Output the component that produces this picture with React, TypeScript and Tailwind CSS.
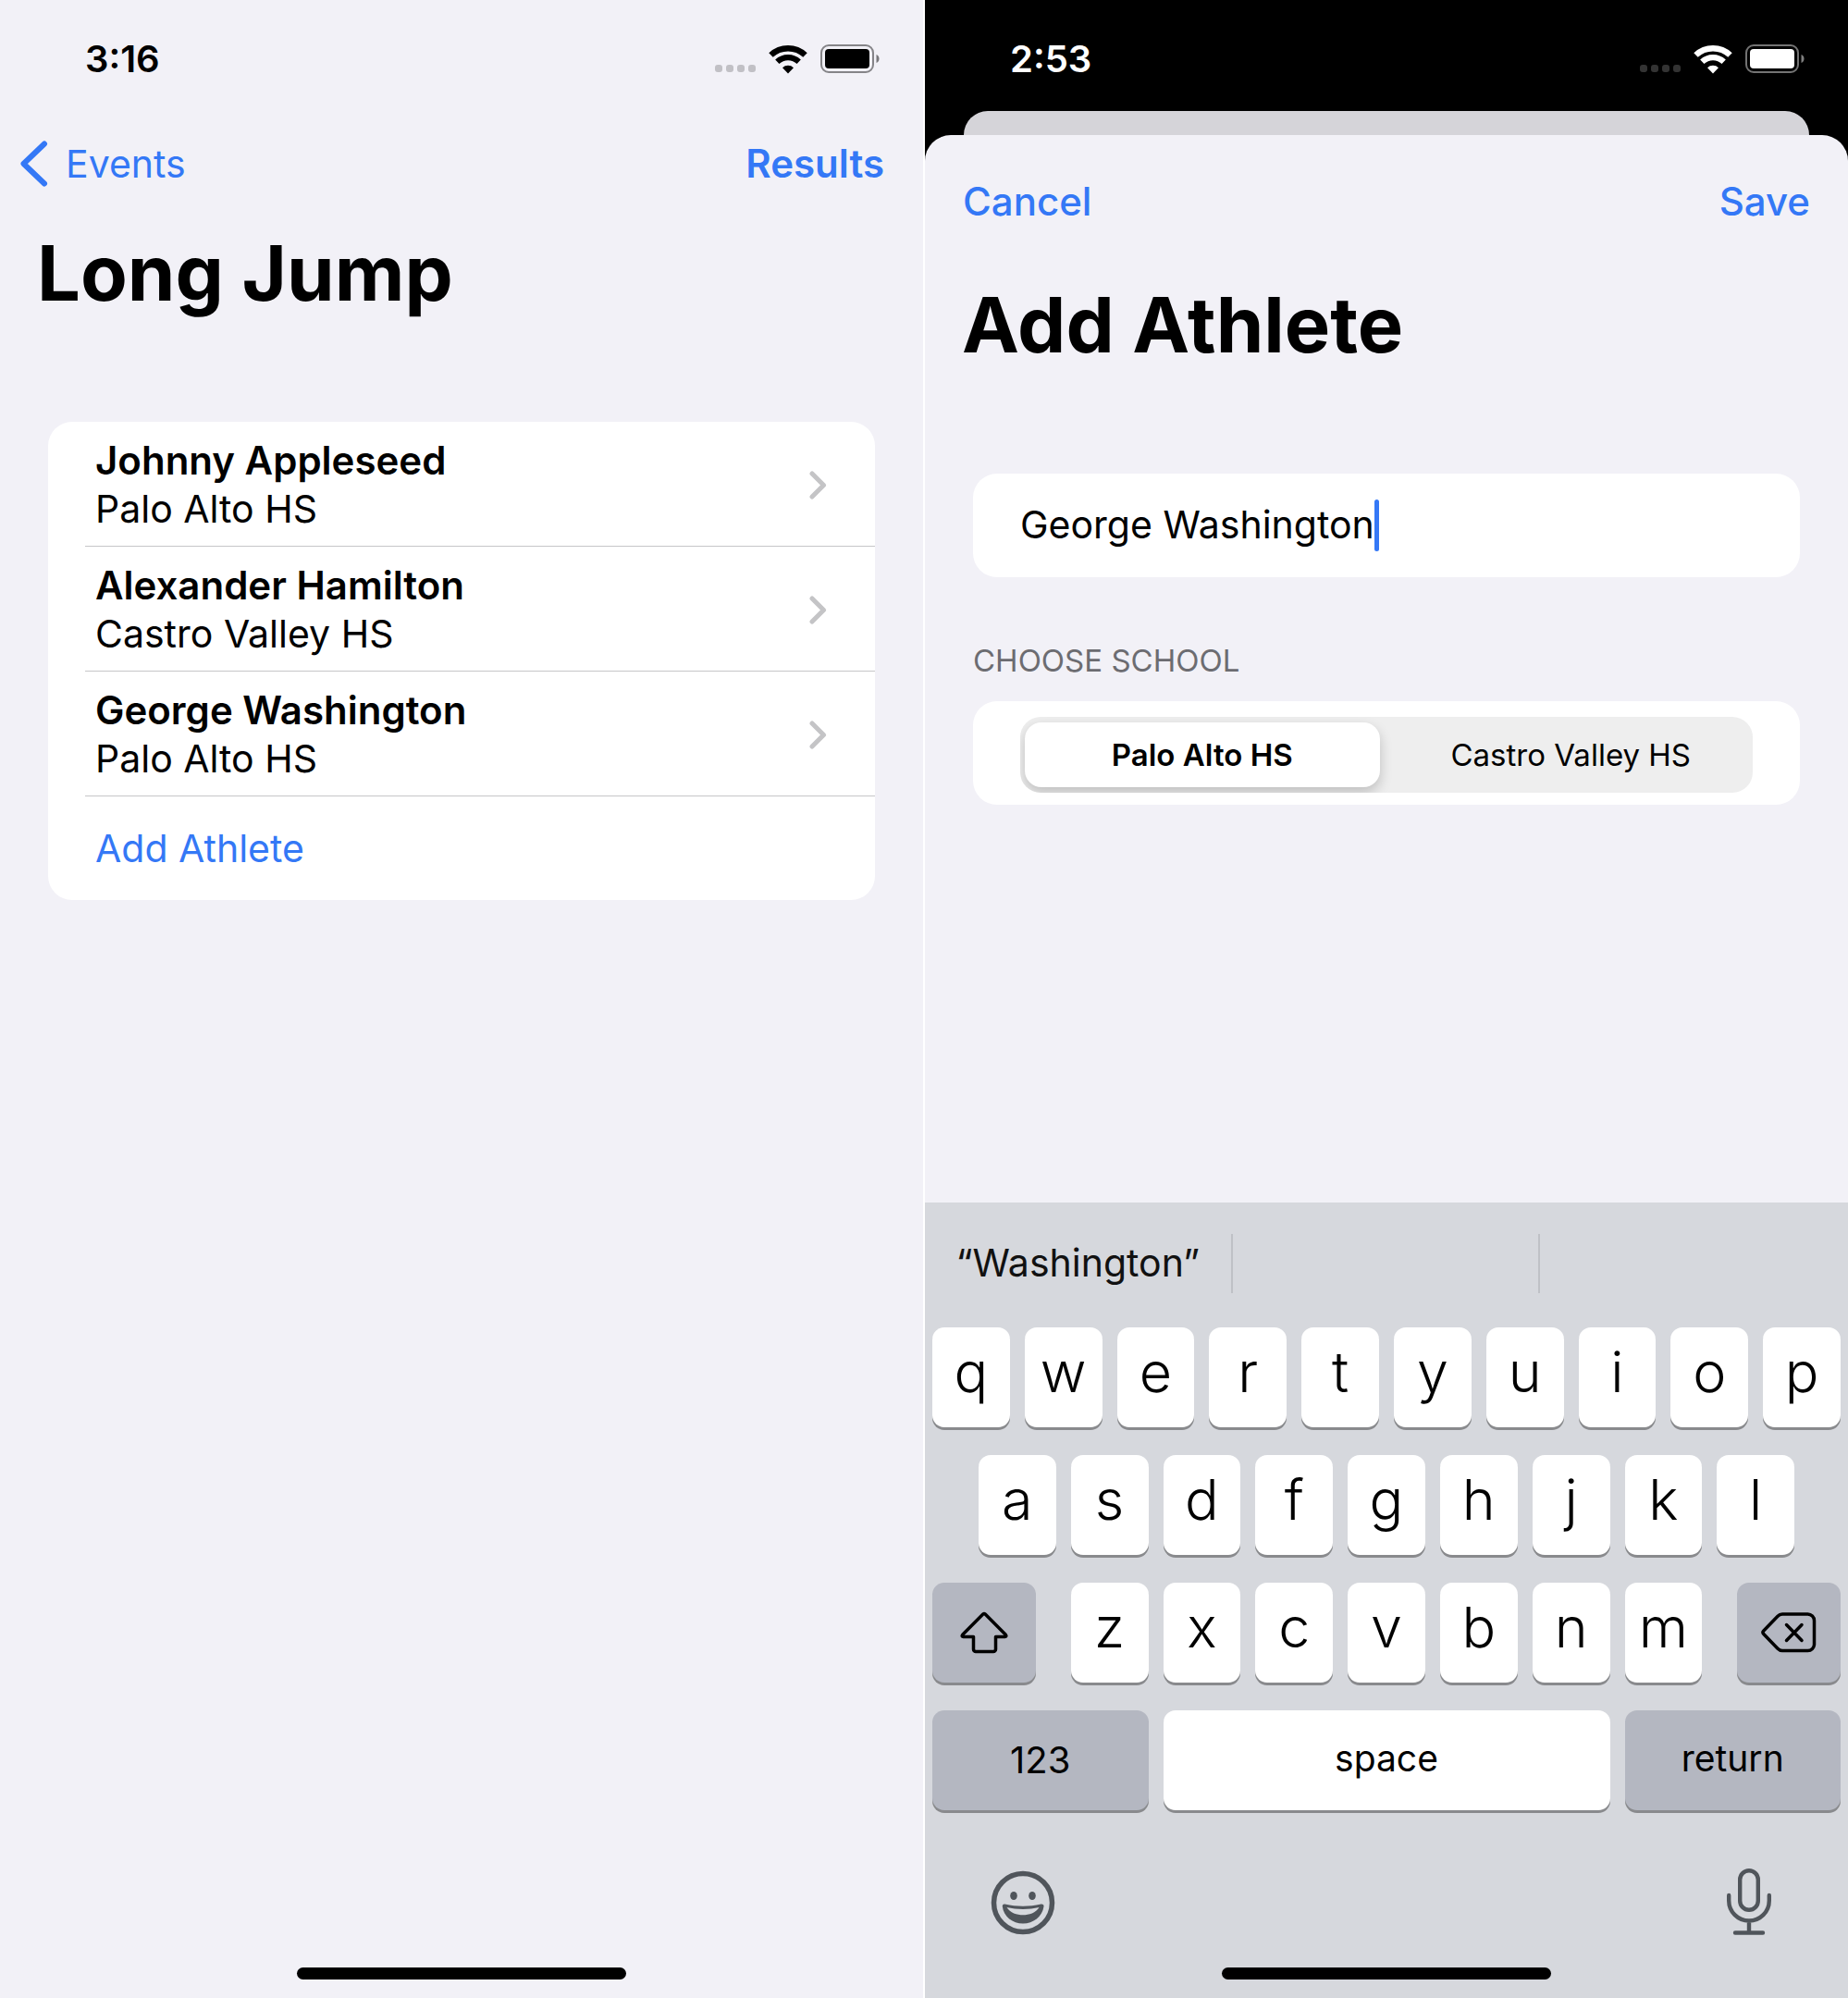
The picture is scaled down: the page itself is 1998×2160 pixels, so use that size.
import { useState, type ReactNode } from "react";

const athletes = [
  { name: "Johnny Appleseed", school: "Palo Alto HS" },
  { name: "Alexander Hamilton", school: "Castro Valley HS" },
  { name: "George Washington", school: "Palo Alto HS" },
];

const schools = ["Palo Alto HS", "Castro Valley HS"];

function WifiIcon() {
  return (
    <svg className="h-8 w-[42px]" viewBox="0 0 42 32" fill="none" stroke="currentColor" aria-hidden="true">
      <path d="M2.5 11.5a27 27 0 0 1 37 0" strokeWidth="6.5" />
      <path d="M9.3 18.8a17 17 0 0 1 23.4 0" strokeWidth="6.2" />
      <path d="M21 31.5l-6-6.2a8.6 8.6 0 0 1 12 0z" fill="currentColor" stroke="none" />
    </svg>
  );
}

function BatteryIcon() {
  return (
    <svg className="h-8 w-16" viewBox="0 0 64 32" aria-hidden="true">
      <rect x="1" y="1" width="56" height="29" rx="8" fill="none" stroke="currentColor" strokeOpacity=".45" strokeWidth="2" />
      <rect x="5" y="5" width="48" height="21" rx="4" fill="currentColor" />
      <path d="M60.5 11c4 1.5 4 7.5 0 9z" fill="currentColor" fillOpacity=".5" />
    </svg>
  );
}

function StatusBar({ time }: { time: string }) {
  return (
    <div className="flex h-[120px] items-start justify-between pt-10 pr-[47px] pl-[92px]">
      <time className="text-[40px] leading-[48px] font-semibold">{time}</time>
      <div className="flex items-center pt-2">
        <div className="mr-3.5 flex gap-1 pt-5">
          {[0, 1, 2, 3].map((dot) => (
            <span key={dot} className="size-2 rounded-[3px] bg-current opacity-20" />
          ))}
        </div>
        <WifiIcon />
        <span className="w-3.5" />
        <BatteryIcon />
      </div>
    </div>
  );
}

function HomeIndicator() {
  return <div className="mx-auto mb-5 h-[13px] w-[356px] rounded-full bg-black" />;
}

function EventScreen() {
  return (
    <section className="flex flex-1 flex-col bg-[#f2f1f7]">
      <StatusBar time="3:16" />
      <nav className="flex h-[114px] items-center justify-between pr-[42px] pl-[22px] text-[#3478f6]">
        <a href="#events" className="flex items-center gap-[18px] text-[41px] leading-[52px]">
          <svg className="h-[50px] w-[31px]" viewBox="0 0 31 50" fill="none" stroke="currentColor" strokeWidth="6" strokeLinecap="round" strokeLinejoin="round" aria-hidden="true">
            <path d="M26 3.500L3.500 25l22.500 21.500" />
          </svg>
          Events
        </a>
        <button type="button" className="text-[42px] leading-[52px] font-semibold">Results</button>
      </nav>
      <h1 className="px-10 text-[83px] leading-[122px] font-bold">Long Jump</h1>
      <ul className="mx-[52px] mt-[100px] overflow-hidden rounded-[26px] bg-white">
        {athletes.map((athlete) => (
          <li key={athlete.name}>
            <button type="button" className="flex w-full items-center justify-between pt-4 pr-[52px] pb-[14px] pl-[51px] text-left leading-[52px]">
              <span>
                <span className="block text-[42px] font-semibold">{athlete.name}</span>
                <span className="block text-[41px]">{athlete.school}</span>
              </span>
              <svg className="h-[31px] w-5" viewBox="0 0 20 31" fill="none" stroke="#c4c4c6" strokeWidth="5" strokeLinecap="round" strokeLinejoin="round" aria-hidden="true">
                <path d="M4 3l12.500 12.500-12.500 12.500" />
              </svg>
            </button>
            <div className="ml-10 h-px bg-[#c6c6c8]" />
          </li>
        ))}
        <li>
          <button type="button" className="w-full py-[30px] pl-[51px] text-left text-[41px] leading-[52px] text-[#3478f6]">Add Athlete</button>
        </li>
      </ul>
      <div className="flex-1" />
      <HomeIndicator />
    </section>
  );
}

const keyShape = "h-[108px] rounded-[13px] text-black shadow-[0_3px_0_#898a8d]";

function LetterKey({ letter, className = "" }: { letter: string; className?: string }) {
  return (
    <div className={`col-span-2 px-2 ${className}`}>
      <button type="button" className={`${keyShape} w-full bg-white pb-3 text-[61px] leading-[60px] font-[360]`}>{letter}</button>
    </div>
  );
}

function GrayKey({ label, className, children }: { label: string; className: string; children: ReactNode }) {
  return (
    <button type="button" aria-label={label} className={`${keyShape} ${className} flex items-center justify-center bg-[#b4b7c1]`}>
      {children}
    </button>
  );
}

function Keyboard() {
  return (
    <div className="bg-[#d6d8dd]">
      <div className="grid h-[135px] grid-cols-3 items-center pb-1 text-[41px]">
        <button type="button" className="h-16 border-r-2 border-[#bfc1c6] text-[#111]">“Washington”</button>
        <span className="h-16 border-r-2 border-[#bfc1c6]" />
        <span />
      </div>
      <div className="flex flex-col gap-[30px]">
        <div className="grid grid-cols-20">
          {"qwertyuiop".split("").map((c) => <LetterKey key={c} letter={c} />)}
        </div>
        <div className="grid grid-cols-20">
          {"asdfghjkl".split("").map((c) => <LetterKey key={c} letter={c} className="first:col-start-2" />)}
        </div>
        <div className="grid grid-cols-20">
          <div className="col-span-3 pl-2">
            <GrayKey label="shift" className="w-28">
              <svg className="h-[46px] w-[52px]" viewBox="0 0 52 46" fill="none" stroke="currentColor" strokeWidth="3.500" strokeLinejoin="round" aria-hidden="true">
                <path d="M24.800 3a1.800 1.800 0 0 1 2.400 0L49.300 25.300c1 1.200.5 2.200-.8 2.200H38.500V41a2.500 2.500 0 0 1-2.500 2.500H17A2.500 2.500 0 0 1 14.500 41V27.500H3.500c-1.300 0-1.800-1-.8-2.200z" />
              </svg>
            </GrayKey>
          </div>
          {"zxcvbnm".split("").map((c) => <LetterKey key={c} letter={c} />)}
          <div className="col-span-3 flex justify-end pr-2">
            <GrayKey label="delete" className="w-28">
              <svg className="h-11 w-[60px]" viewBox="0 0 60 44" fill="none" stroke="currentColor" strokeWidth="3.500" strokeLinecap="round" strokeLinejoin="round" aria-hidden="true">
                <path d="M23 2H50.500a7 7 0 0 1 7 7V34.500a7 7 0 0 1-7 7H23a7 7 0 0 1-5-2.200L2.800 23.500a2.500 2.500 0 0 1 0-3.500L18 4.200A7 7 0 0 1 23 2z" />
                <path d="M27.500 13.500L44 30.500M44 13.500L27.500 30.500" />
              </svg>
            </GrayKey>
          </div>
        </div>
        <div className="grid grid-cols-20">
          <div className="col-span-5 px-2"><GrayKey label="123" className="w-full text-[40px]">123</GrayKey></div>
          <div className="col-span-10 px-2">
            <button type="button" className={`${keyShape} w-full bg-white pb-1 text-[39px]`}>space</button>
          </div>
          <div className="col-span-5 px-2"><GrayKey label="return" className="w-full pb-1 text-[39px]">return</GrayKey></div>
        </div>
      </div>
      <div className="flex items-end justify-between pt-[63px] pr-[83px] pb-[35px] pl-[71px] text-[#50555b]">
        <button type="button" aria-label="Emoji">
          <svg className="size-[70px]" viewBox="0 0 70 70" aria-hidden="true">
            <circle cx="35" cy="35" r="31.5" fill="none" stroke="currentColor" strokeWidth="5.5" />
            <ellipse cx="25" cy="27.5" rx="3.8" ry="4.5" fill="currentColor" />
            <ellipse cx="45" cy="27.5" rx="3.8" ry="4.5" fill="currentColor" />
            <path fillRule="evenodd" fill="currentColor" d="M15.500 36.500c13.500 3 25.500 3 39 0 2-.3 3.300.6 3 2.500C56 50 46 57.600 35 57.600S14 50 12.800 39c-.2-1.900.9-2.800 2.700-2.500zM17.500 40c3.500 6 11 8.300 17.500 8.300S49 46 52.500 40c-11 2.500-24 2.500-35 0z" />
          </svg>
        </button>
        <button type="button" aria-label="Dictate">
          <svg className="h-[72px] w-12" viewBox="0 0 48 72" fill="none" stroke="currentColor" strokeWidth="4.4" strokeLinecap="round" aria-hidden="true">
            <rect x="14.2" y="2.2" width="19.6" height="42.600" rx="9.8" />
            <path d="M2.200 29v5.700a21.800 21.800 0 0 0 43.600 0V29M24 57v12M9 69.500h30" />
          </svg>
        </button>
      </div>
      <HomeIndicator />
      <div />
    </div>
  );
}

function AddAthleteScreen() {
  const [name, setName] = useState("George Washington");
  const [school, setSchool] = useState(schools[0]);
  return (
    <section className="flex flex-1 flex-col bg-black">
      <div className="text-white"><StatusBar time="2:53" /></div>
      <div className="mx-[42px] h-[26px] rounded-t-[26px] bg-[#d5d4d9]" />
      <div className="flex flex-1 flex-col rounded-t-[28px] bg-[#f2f1f7]">
        <nav className="flex justify-between px-[41px] pt-[46px] text-[42px] leading-[52px] font-medium text-[#3478f6]">
          <button type="button">Cancel</button>
          <button type="button">Save</button>
        </nav>
        <h1 className="px-10 pt-[46px] text-[83px] leading-[122px] font-bold">Add Athlete</h1>
        <div className="mx-[52px] mt-[100px] flex h-28 items-center rounded-[26px] bg-white px-[51px] text-[41px]">
          <div className="relative">
            <span className="invisible whitespace-pre" aria-hidden="true">{name}</span>
            <input aria-label="Athlete name" value={name} onChange={(e) => setName(e.target.value)} className="absolute inset-0 w-full bg-transparent outline-none" />
          </div>
          <span className="h-14 w-[5px] rounded-full bg-[#3478f6]" />
        </div>
        <fieldset className="mx-[52px] mt-[66px]">
          <legend className="text-[33px] leading-[48px] text-[#6c6c71]">CHOOSE SCHOOL</legend>
          <div className="mt-5 rounded-[26px] bg-white px-[51px] pt-[17px] pb-[13px]">
            <div className="grid grid-cols-2 overflow-hidden rounded-[22px] bg-[#eeeeee] py-1.5 pl-[5px] text-[33px] leading-[70px]">
              {schools.map((s) => (
                <label key={s} className="rounded-[18px] text-center has-checked:mr-2.5 has-checked:bg-white has-checked:font-semibold has-checked:shadow-[0_6px_14px_rgba(0,0,0,0.2)]">
                  <input type="radio" name="school" className="sr-only" checked={school === s} onChange={() => setSchool(s)} />
                  {s}
                </label>
              ))}
            </div>
          </div>
        </fieldset>
        <div className="flex-1" />
        <Keyboard />
      </div>
    </section>
  );
}

export default function App() {
  return (
    <main className="flex min-h-screen gap-0.5 bg-white font-['Inter',sans-serif] text-black">
      <EventScreen />
      <AddAthleteScreen />
    </main>
  );
}
